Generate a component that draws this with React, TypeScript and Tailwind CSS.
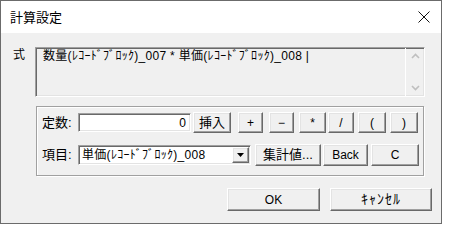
import React, {PropsWithChildren} from 'react'

const font = {fontFamily: '"Liberation Sans", "Noto Sans CJK JP", sans-serif'}

// classic raised 3D button
const Btn = ({children, className = ''}: PropsWithChildren<{className?: string}>) => (
    <div
        className={`flex items-center justify-center bg-[#f0f0f0] border border-t-white border-l-white border-b-[#696969] border-r-[#696969] shadow-[inset_-1px_-1px_0_#a0a0a0,inset_1px_1px_0_#e3e3e3] text-[12px] text-black ${className}`}>
        {children}
    </div>
)

// sunken edit field
const Sunken = ({children, className = ''}: PropsWithChildren<{className?: string}>) => (
    <div
        className={`border border-t-[#a0a0a0] border-l-[#a0a0a0] border-b-white border-r-white shadow-[inset_1px_1px_0_#696969,inset_-1px_-1px_0_#e3e3e3] ${className}`}>
        {children}
    </div>
)

const App = () => {
    return (
        <div className="w-[450px] h-[230px] bg-white" style={font}>
            <div className="w-[442px] h-[224px] border border-[#6b6b6b] bg-[#f0f0f0] flex flex-col">
                {/* title bar */}
                <div className="h-[32px] bg-white flex items-center justify-between pl-[9px] pr-[11px] shrink-0">
                    <span className="text-[13px] text-black" style={{fontFamily: '"Noto Sans CJK JP", sans-serif'}}>計算設定</span>
                    <svg width="12" height="12" viewBox="0 0 12 12">
                        <path d="M0.5 0.5 L11.5 11.5 M11.5 0.5 L0.5 11.5" stroke="#111" strokeWidth="1"/>
                    </svg>
                </div>

                {/* formula */}
                <div className="flex mt-[14px] pl-[12px]">
                    <span className="w-[22px] text-[12px] leading-[14px] pt-[1px]">式</span>
                    <Sunken className="w-[390px] h-[50px] bg-[#f0f0f0] flex">
                        <div className="flex-1 pl-[7px] pt-[1px] text-[12px] leading-[14px] whitespace-nowrap tracking-[0.3px]">
                            数量(ﾚｺｰﾄﾞﾌﾞﾛｯｸ)_007 * 単価(ﾚｺｰﾄﾞﾌﾞﾛｯｸ)_008 |
                        </div>
                        <div className="w-[19px] border-l border-white flex flex-col items-center justify-between py-[5px]">
                            <svg width="9" height="6" viewBox="0 0 9 6">
                                <path d="M1 5 L4.5 1.5 L8 5" stroke="#bfbfbf" strokeWidth="1.6" fill="none"/>
                            </svg>
                            <svg width="9" height="6" viewBox="0 0 9 6">
                                <path d="M1 1 L4.5 4.5 L8 1" stroke="#bfbfbf" strokeWidth="1.6" fill="none"/>
                            </svg>
                        </div>
                    </Sunken>
                </div>

                {/* group box */}
                <div className="ml-[35px] mt-[9px] w-[388px] h-[70px] border border-[#a0a0a0] shadow-[inset_1px_1px_0_white,1px_1px_0_white] flex flex-col pl-[5px] pt-[5px]">
                    <div className="flex items-center h-[21px]">
                        <span className="w-[36px] text-[13px]">定数:</span>
                        <Sunken className="w-[113px] h-[19px] bg-white flex items-center justify-end pr-[4px] text-[12px]">0</Sunken>
                        <Btn className="ml-[2px] w-[38px] h-[21px] text-[13px]">挿入</Btn>
                        <Btn className="ml-[7px] w-[25px] h-[21px]">+</Btn>
                        <Btn className="ml-[6px] w-[25px] h-[21px]">−</Btn>
                        <Btn className="ml-[5px] w-[27px] h-[21px]">*</Btn>
                        <Btn className="ml-[2px] w-[26px] h-[21px]">/</Btn>
                        <Btn className="ml-[4px] w-[28px] h-[21px]">(</Btn>
                        <Btn className="ml-[4px] w-[28px] h-[21px]">)</Btn>
                    </div>
                    <div className="flex items-center h-[22px] mt-[11px]">
                        <span className="w-[36px] text-[13px]">項目:</span>
                        <Sunken className="w-[173px] h-[20px] bg-white flex items-center">
                            <span className="flex-1 pl-[3px] text-[12px] whitespace-nowrap tracking-[0.3px]">単価(ﾚｺｰﾄﾞﾌﾞﾛｯｸ)_008</span>
                            <Btn className="w-[17px] h-[16px] mr-[1px]">
                                <svg width="7" height="4" viewBox="0 0 7 4"><path d="M0 0 H7 L3.5 4 Z" fill="#000"/></svg>
                            </Btn>
                        </Sunken>
                        <Btn className="ml-[4px] w-[66px] h-[22px] text-[13px]">集計値...</Btn>
                        <Btn className="ml-[2px] w-[45px] h-[22px]">Back</Btn>
                        <Btn className="ml-[3px] w-[48px] h-[22px]">C</Btn>
                    </div>
                </div>

                {/* dialog buttons */}
                <div className="flex mt-[12px] pl-[226px]">
                    <Btn className="w-[93px] h-[23px]">OK</Btn>
                    <Btn className="ml-[10px] w-[102px] h-[23px] text-[14px] tracking-[1px]">ｷｬﾝｾﾙ</Btn>
                </div>
            </div>
        </div>
    )
}
export default App
